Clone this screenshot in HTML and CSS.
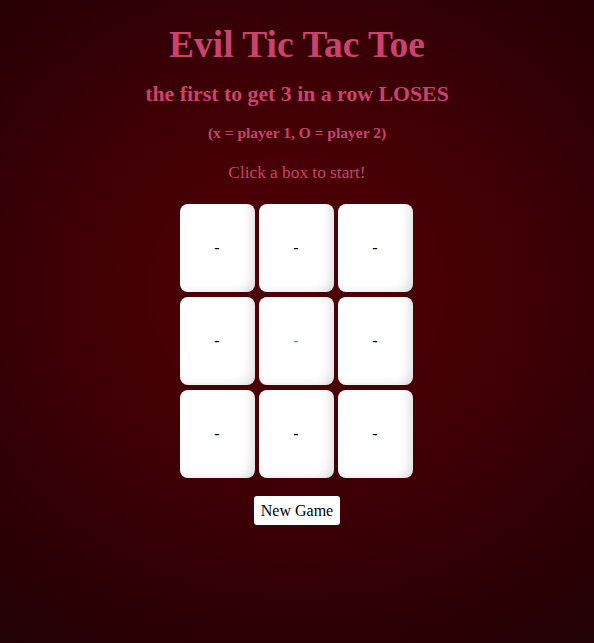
FILE: index.html
```html
<!DOCTYPE html>
<html>
<head>
<meta charset="utf-8">
<link rel="stylesheet" href="styles.css">
</head>
<body>
<div class="page">
  <h1 class="title">Evil Tic Tac Toe</h1>
  <h2 class="subtitle">the first to get 3 in a row LOSES</h2>
  <p class="players">(x = player 1, O = player 2)</p>
  <p class="status">Click a box to start!</p>
  <div class="board">
    <div class="cell">-</div>
    <div class="cell">-</div>
    <div class="cell">-</div>
    <div class="cell">-</div>
    <div class="cell center">-</div>
    <div class="cell">-</div>
    <div class="cell">-</div>
    <div class="cell">-</div>
    <div class="cell">-</div>
  </div>
  <button class="new-game">New Game</button>
</div>
</body>
</html>
```
FILE: styles.css
```css
html, body {
  margin: 0;
  height: 100%;
}
body {
  background: radial-gradient(ellipse 90% 75% at 50% 45%, #4e0005 0%, #480005 25%, #3a0005 50%, #2a0004 75%, #1e0306 100%);
  font-family: "Liberation Serif", "DejaVu Serif", serif;
  color: #c9436f;
}
.page {
  display: flex;
  flex-direction: column;
  align-items: center;
  padding-top: 25px;
}
.title {
  margin: 0;
  font-size: 37.5px;
  line-height: 40px;
  font-weight: bold;
}
.subtitle {
  margin: 17px 0 0;
  font-size: 21.8px;
  line-height: 24px;
  font-weight: bold;
}
.players {
  margin: 18px 0 0;
  font-size: 15.5px;
  line-height: 18px;
  font-weight: bold;
}
.status {
  margin: 21px 0 0;
  font-size: 17.3px;
  line-height: 20px;
}
.board {
  margin-top: 21px;
  margin-right: 2px;
  display: grid;
  grid-template-columns: repeat(3, 75px);
  grid-auto-rows: 88px;
  column-gap: 4px;
  row-gap: 5px;
}
.cell {
  background: #fff;
  border-radius: 8px;
  display: flex;
  align-items: center;
  justify-content: center;
  color: #000;
  font-size: 16px;
  box-shadow: inset -10px -6px 12px -8px rgba(0, 0, 0, 0.16);
}
.cell.center {
  color: #6aa06a;
}
.new-game {
  margin-top: 18px;
  background: #fff;
  border: none;
  border-radius: 3px;
  width: 86px;
  height: 29px;
  padding: 0;
  font-family: "Liberation Serif", "DejaVu Serif", serif;
  font-size: 16px;
  color: #000;
}
```
